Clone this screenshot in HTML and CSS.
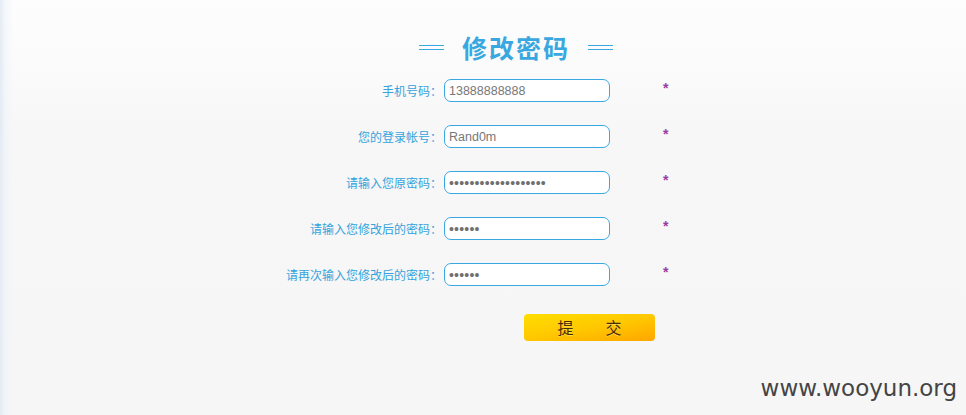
FILE: index.html
```html
<!DOCTYPE html>
<html lang="zh-CN">
<head>
<meta charset="utf-8">
<title>修改密码</title>
<link rel="stylesheet" href="styles.css">
</head>
<body>
<div class="page">
  <h1 class="title"><span class="dash"></span><span class="title-text">修改密码</span><span class="dash"></span></h1>
  <form class="form">
    <label class="label" for="f1">手机号码：</label>
    <input class="field" id="f1" type="text" value="13888888888">
    <span class="req">*</span>

    <label class="label" for="f2">您的登录帐号：</label>
    <input class="field" id="f2" type="text" value="Rand0m">
    <span class="req">*</span>

    <label class="label" for="f3">请输入您原密码：</label>
    <input class="field field-pw" id="f3" type="password" value="aaaaaaaaaaaaaaaaaaa">
    <span class="req">*</span>

    <label class="label" for="f4">请输入您修改后的密码：</label>
    <input class="field field-pw" id="f4" type="password" value="aaaaaa">
    <span class="req">*</span>

    <label class="label" for="f5">请再次输入您修改后的密码：</label>
    <input class="field field-pw" id="f5" type="password" value="aaaaaa">
    <span class="req">*</span>

    <span class="spacer"></span>
    <div class="submit" role="button"><span class="btn-char">提</span><span class="btn-char">交</span></div>
  </form>
</div>
<div class="watermark">www.wooyun.org</div>
</body>
</html>
```
FILE: styles.css
```css
html, body {
  margin: 0;
  padding: 0;
  height: 100%;
}
body {
  background:
    linear-gradient(to right, rgba(225, 233, 243, 0.9) 0, rgba(236, 241, 247, 0.5) 5px, rgba(246, 246, 246, 0) 14px),
    linear-gradient(to bottom, #fdfdfd 0, #fbfbfb 60px, #f7f7f7 130px, #f6f6f6 100%);
  font-family: "Liberation Sans", "Noto Sans CJK SC", sans-serif;
  position: relative;
  overflow: hidden;
}
.page {
  padding-top: 31px;
}
.title {
  margin: 0;
  display: flex;
  align-items: center;
  padding-left: 419px;
  height: 32px;
}
.dash {
  width: 25px;
  height: 3px;
  border-top: 1px solid #3aa8e0;
  border-bottom: 1px solid #3aa8e0;
  margin-top: 1px;
}
.title-text {
  font-family: "Noto Sans CJK SC", sans-serif;
  font-size: 25px;
  font-weight: 700;
  color: #3aa8e0;
  letter-spacing: 2px;
  margin: 0 18px 0 18px;
  line-height: 32px;
}
.form {
  margin-top: 16px;
  display: grid;
  grid-template-columns: 438px 166px auto;
  column-gap: 6px;
  row-gap: 23px;
  align-items: center;
}
.label {
  text-align: right;
  font-family: "Noto Sans CJK SC", sans-serif;
  font-size: 12px;
  color: #35a3dc;
  line-height: 23px;
  margin-right: -4px;
}
.field {
  box-sizing: border-box;
  width: 166px;
  height: 23px;
  margin: 0;
  border: 1px solid #3aa8e0;
  border-radius: 7px;
  background: #fff;
  padding: 0 4px;
  font-family: "Liberation Sans", sans-serif;
  font-size: 12.5px;
  color: #777;
  outline: none;
}
.field-pw {
  font-size: 14px;
  letter-spacing: 0.2px;
  color: #6f6f6f;
}
.req {
  margin-left: 47px;
  color: #9a3aa8;
  font-family: "Liberation Sans", sans-serif;
  font-size: 14px;
  font-weight: 700;
  line-height: 23px;
  align-self: start;
  margin-top: -2px;
}
.spacer {
  display: block;
}
.submit {
  grid-column: 2 / span 2;
  margin-left: 80px;
  margin-top: 5px;
  width: 131px;
  height: 27px;
  border-radius: 4px;
  background: linear-gradient(170deg, #ffde00 0%, #ffc800 50%, #ffa600 100%);
  color: #4a2a00;
  font-family: "Noto Sans CJK SC", sans-serif;
  font-size: 16px;
  line-height: 27px;
  text-shadow: 0 1px 0 rgba(255, 230, 120, 0.6);
  justify-self: start;
  display: flex;
  justify-content: center;
  align-items: center;
  cursor: pointer;
}
.btn-char {
  margin: 0 16px;
}
.watermark {
  position: absolute;
  right: 9px;
  bottom: 14px;
  font-family: "DejaVu Sans", sans-serif;
  font-size: 23px;
  color: #444;
}
```
